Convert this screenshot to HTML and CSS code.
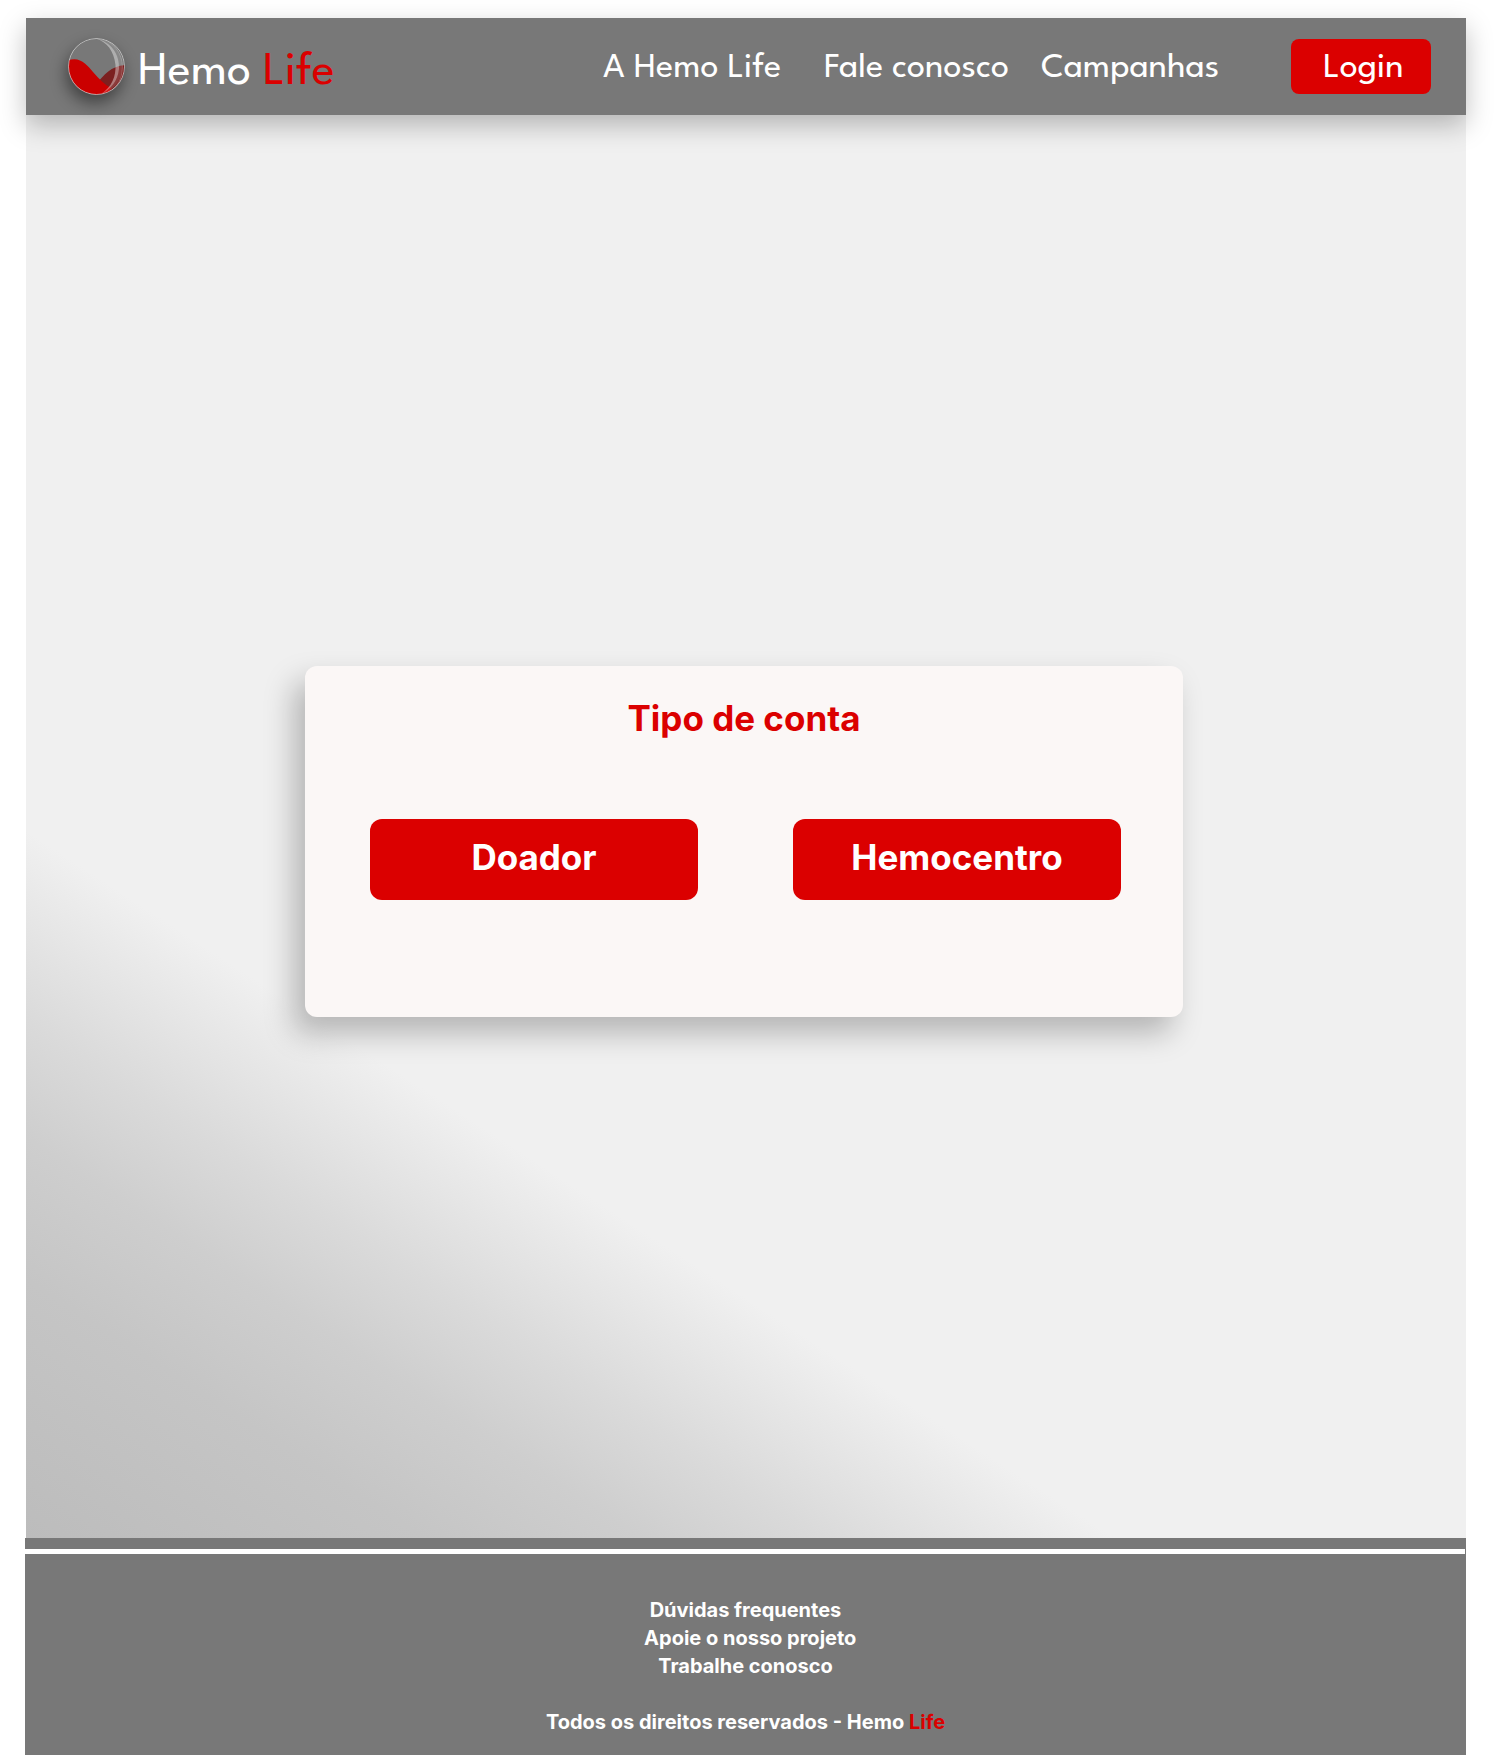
FILE: index.html
```html
<!DOCTYPE html>
<html lang="pt-BR">
<head>
  <meta charset="utf-8">
  <meta name="viewport" content="width=device-width, initial-scale=1">
  <title>Hemo Life - Tipo de conta</title>
  <link rel="stylesheet" href="styles.css">
</head>
<body>
  <header class="header">
    <a class="brand" href="#">
      <svg class="brand-icon" viewBox="0 0 57 57" aria-hidden="true">
        <defs>
          <clipPath id="drop"><circle cx="28.5" cy="28.5" r="28"/></clipPath>
        </defs>
        <g clip-path="url(#drop)">
          <path d="M28 46C36 37 43 28 57 27V57H28Z" fill="#7c2020"/>
          <path d="M0 22.500C12 18 19 27 25 34C31 41 37 47 43 50L40 57H0Z" fill="#cb0000"/>
          <path d="M28 .5C43 4 52 16 51 31C50 43 42 52 33 56C44 49 48 38 47.500 27C46 13 39 4 28 .5Z" fill="#fff" fill-opacity=".4"/>
          <path d="M28 .5C46 2 56 16 54 33C52 44 45 53 33 56C42 52 50 43 51 31C52 16 43 4 28 .5Z" fill="#fff" fill-opacity=".12"/>
          <path d="M36 1C50 8 56 20 54 34C53 43 47 51 40 55" fill="none" stroke="#fff" stroke-opacity=".25"/>
        </g>
        <circle cx="28.5" cy="28.5" r="28" fill="none" stroke="#fff" stroke-opacity=".5"/>
      </svg>
      <span class="brand-name">Hemo <span class="accent">Life</span></span>
    </a>
    <nav class="nav">
      <a href="#">A Hemo Life</a>
      <a href="#">Fale conosco</a>
      <a href="#">Campanhas</a>
    </nav>
    <button class="login" type="button">Login</button>
  </header>

  <main class="main">
    <section class="card">
      <h1 class="card-title">Tipo de conta</h1>
      <div class="choices">
        <button class="choice" type="button">Doador</button>
        <button class="choice" type="button">Hemocentro</button>
      </div>
    </section>
  </main>

  <footer class="footer">
    <hr class="footer-line">
    <ul class="footer-links">
      <li><a href="#">Dúvidas frequentes</a></li>
      <li>&nbsp;&nbsp;<a href="#">Apoie o nosso projeto</a></li>
      <li><a href="#">Trabalhe conosco</a></li>
    </ul>
    <p class="copyright">Todos os direitos reservados - Hemo <span class="accent">Life</span></p>
  </footer>
</body>
</html>
```

FILE: styles.css
```css
* {
  box-sizing: border-box;
}

body {
  display: flex;
  flex-direction: column;
  min-height: 100vh;
  margin: 0;
  padding: 18px 28px 0 26px;
  background: #fff;
  color: #fff;
  font-family: Inter, sans-serif;
}

a {
  color: inherit;
  text-decoration: none;
}

button {
  border: 0;
  background: #db0000;
  color: #fff;
  cursor: pointer;
}

.accent {
  color: #db0000;
}

/* Header */

.header {
  position: relative;
  display: flex;
  align-items: center;
  padding: 20px 35px 20px 42px;
  background: #787878;
  box-shadow: 0 10px 25px rgba(0, 0, 0, .25);
  font-family: "League Spartan", Lato, sans-serif;
}

.brand {
  display: flex;
  align-items: center;
  gap: 13px;
  margin-right: auto;
}

.brand-icon {
  width: 57px;
  height: 57px;
  border-radius: 50%;
  box-shadow: -2px 8px 16px rgba(0, 0, 0, .45);
}

.brand-name {
  padding-top: 12px;
  font-size: 48px;
  line-height: 44px;
}

.nav {
  display: grid;
  grid-template-columns: 221px 217px 250px;
  padding-top: 5px;
  font-size: 36px;
  line-height: 44px;
}

.login {
  width: 140px;
  padding: 8px 0 3px 5px;
  border-radius: 8px;
  font-family: inherit;
  font-size: 36px;
  line-height: 44px;
}

/* Account type */

.main {
  display: flex;
  flex: 1;
  align-items: center;
  justify-content: center;
  padding: 30px 4px 0 0;
  background: linear-gradient(33deg, #bcbcbc 0%, #c5c5c5 11%, #cecece 17%, #dadada 22%, #f0f0f0 30%);
}

.card {
  width: 100%;
  max-width: 878px;
  padding: 30px 0 117px;
  border-radius: 12px;
  background: #fbf7f6;
  box-shadow: -11px 16px 30px rgba(0, 0, 0, .25);
}

.card-title {
  margin: 0 0 79px;
  color: #db0000;
  font-size: 35px;
  line-height: 44px;
  text-align: center;
}

.choices {
  display: flex;
  gap: 95px;
  padding: 0 62px 0 65px;
}

.choice {
  flex: 1;
  padding: 16px 0 21px;
  border-radius: 12px;
  font-family: inherit;
  font-size: 35px;
  font-weight: 700;
  line-height: 44px;
}

/* Footer */

.footer {
  margin-left: -1px;
  padding: 11px 0 19px;
  background: #787878;
  font-size: 20px;
  font-weight: 700;
  line-height: 28px;
  text-align: center;
}

.footer-line {
  height: 5px;
  margin: 0 1px 42px 0;
  border: 0;
  background: #fff;
}

.footer-links {
  margin: 0 0 28px;
  padding: 0;
  list-style: none;
}

.copyright {
  margin: 0;
}
```
